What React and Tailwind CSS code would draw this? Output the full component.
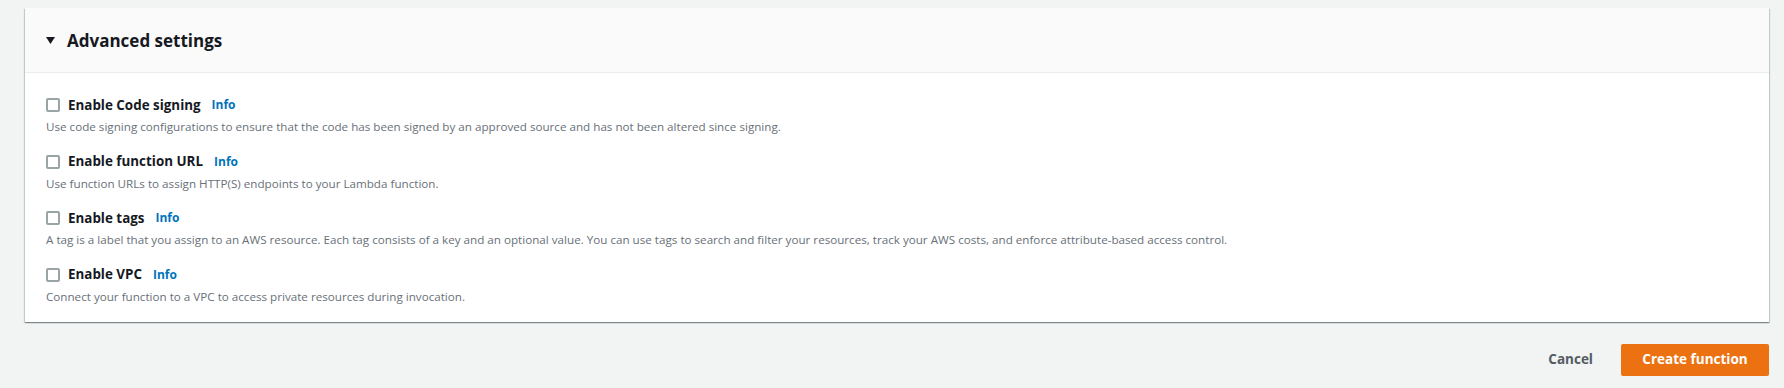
import React, { useState } from "react";

const options = [
  {
    id: "codeSigning",
    label: "Enable Code signing",
    description:
      "Use code signing configurations to ensure that the code has been signed by an approved source and has not been altered since signing.",
  },
  {
    id: "functionUrl",
    label: "Enable function URL",
    description: "Use function URLs to assign HTTP(S) endpoints to your Lambda function.",
  },
  {
    id: "tags",
    label: "Enable tags",
    description:
      "A tag is a label that you assign to an AWS resource. Each tag consists of a key and an optional value. You can use tags to search and filter your resources, track your AWS costs, and enforce attribute-based access control.",
  },
  {
    id: "vpc",
    label: "Enable VPC",
    description: "Connect your function to a VPC to access private resources during invocation.",
  },
];

const App = () => {
  const [checked, setChecked] = useState({});

  const toggle = (id) => {
    setChecked((prev) => ({ ...prev, [id]: !prev[id] }));
  };

  return (
    <div className="min-h-[388px] bg-[#f2f3f3] pt-[8px] pl-[25px] pr-[15px] pb-[13px] font-['Open_Sans',sans-serif] text-[#16191f]">
      <div className="bg-white shadow-[0_1px_1px_0_rgba(0,28,36,0.3),1px_1px_1px_0_rgba(0,28,36,0.15),-1px_1px_1px_0_rgba(0,28,36,0.15)]">
        {/* header */}
        <div className="h-[65px] bg-[#fafafa] border-b border-[#eaeded] flex items-center pl-[21px]">
          <svg width="9" height="7" viewBox="0 0 9 7" className="mr-[12px]">
            <polygon points="0,0 9,0 4.5,7" fill="#16191f" />
          </svg>
          <h2 className="text-[17px] font-bold leading-none">Advanced settings</h2>
        </div>

        {/* body */}
        <div className="pt-[21px] pb-[17px] pl-[21px] flex flex-col gap-[15.5px]">
          {options.map((opt) => (
            <div key={opt.id}>
              <label className="flex items-center h-[22px] cursor-pointer">
                <input
                  type="checkbox"
                  checked={!!checked[opt.id]}
                  onChange={() => toggle(opt.id)}
                  className="appearance-none w-[14px] h-[14px] border-2 border-[#98a4a6] rounded-[2px] bg-white mr-[8px] checked:bg-[#0073bb] checked:border-[#0073bb]"
                />
                <span className="text-[13.4px] font-bold">{opt.label}</span>
                <a href="#" className="ml-[11px] text-[12px] font-bold text-[#0073bb]">
                  Info
                </a>
              </label>
              <p className="mt-[3px] text-[11.65px] leading-[16px] text-[#687078]">{opt.description}</p>
            </div>
          ))}
        </div>
      </div>

      {/* footer actions */}
      <div className="flex justify-end items-center mt-[22px]">
        <button type="button" className="px-[20px] h-[32px] text-[13.5px] font-bold text-[#545b64]">
          Cancel
        </button>
        <button
          type="button"
          className="ml-[8px] w-[148px] h-[32px] rounded-[2px] bg-[#ec7211] text-white text-[13.5px] font-bold"
        >
          Create function
        </button>
      </div>
    </div>
  );
};

export default App;
